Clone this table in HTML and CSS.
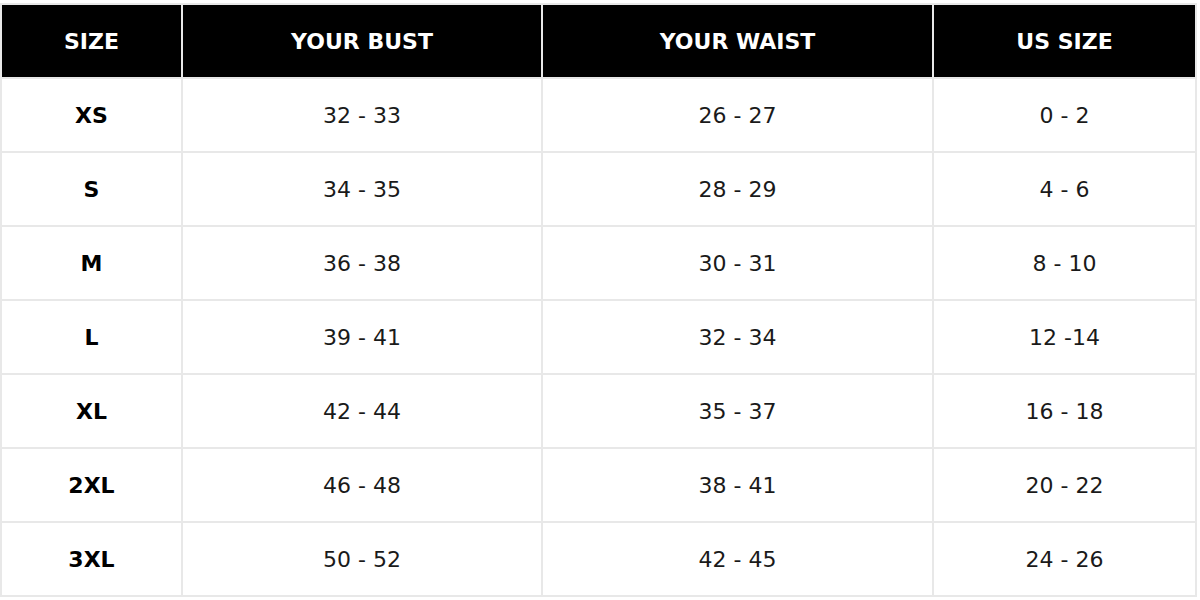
FILE: index.html
```html
<!DOCTYPE html>
<html>
<head>
<meta charset="utf-8">
<link rel="stylesheet" href="styles.css">
</head>
<body>
<table class="size-chart">
  <colgroup>
    <col class="c1"><col class="c2"><col class="c3"><col class="c4">
  </colgroup>
  <thead>
    <tr><th>SIZE</th><th>YOUR BUST</th><th>YOUR WAIST</th><th>US SIZE</th></tr>
  </thead>
  <tbody>
    <tr><td class="size">XS</td><td>32 - 33</td><td>26 - 27</td><td>0 - 2</td></tr>
    <tr><td class="size">S</td><td>34 - 35</td><td>28 - 29</td><td>4 - 6</td></tr>
    <tr><td class="size">M</td><td>36 - 38</td><td>30 - 31</td><td>8 - 10</td></tr>
    <tr><td class="size">L</td><td>39 - 41</td><td>32 - 34</td><td>12 -14</td></tr>
    <tr><td class="size">XL</td><td>42 - 44</td><td>35 - 37</td><td>16 - 18</td></tr>
    <tr><td class="size">2XL</td><td>46 - 48</td><td>38 - 41</td><td>20 - 22</td></tr>
    <tr><td class="size">3XL</td><td>50 - 52</td><td>42 - 45</td><td>24 - 26</td></tr>
  </tbody>
</table>
</body>
</html>
```
FILE: styles.css
```css
html, body {
  margin: 0;
  padding: 0;
  background: #ffffff;
}
body {
  padding: 3px 0 0 0;
  font-family: "DejaVu Sans", "Liberation Sans", sans-serif;
}
.size-chart {
  border-collapse: collapse;
  table-layout: fixed;
  width: 1195px;
  color: #1a1a1a;
  font-size: 22px;
}
.c1 { width: 181px; }
.c2 { width: 360px; }
.c3 { width: 391px; }
.c4 { width: 263px; }
.size-chart th,
.size-chart td {
  border: 2px solid #e8e8e8;
  text-align: center;
  vertical-align: middle;
  padding: 0;
}
.size-chart th {
  background: #000000;
  color: #ffffff;
  font-weight: 700;
  height: 72px;
}
.size-chart td {
  height: 72px;
  font-weight: 400;
}
.size-chart td.size {
  font-weight: 700;
  color: #000000;
}
```
